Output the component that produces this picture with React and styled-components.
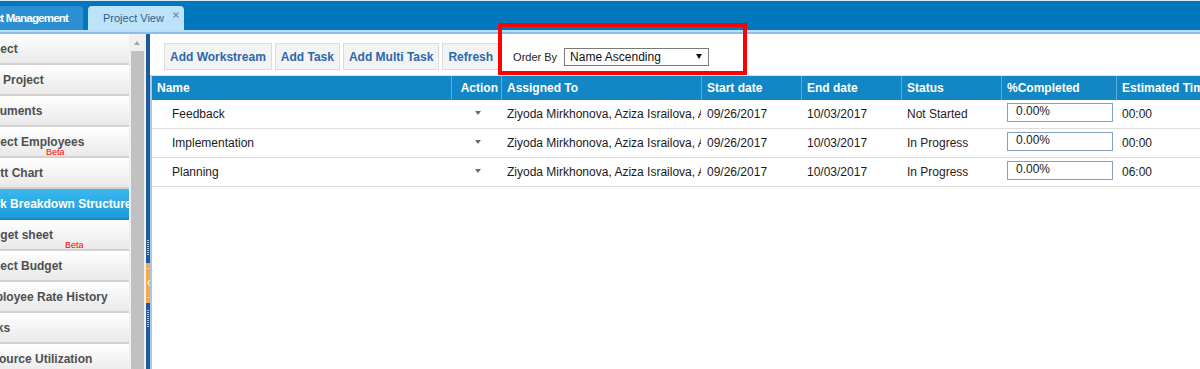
import React from 'react';
import styled, { createGlobalStyle } from 'styled-components';

const GlobalStyle = createGlobalStyle`
  html, body { margin: 0; padding: 0; background: #fff; }
  body { font-family: "Liberation Sans", Arial, sans-serif; font-size: 12px; color: #222; }
  * { box-sizing: border-box; }
`;

const Page = styled.div`
  position: relative;
  width: 1200px;
  height: 369px;
  overflow: hidden;
  display: flex;
  flex-direction: column;
  background: #fff;
`;

const TopBar = styled.div`
  flex: none;
  display: flex;
  flex-direction: column;
`;

const TabRow = styled.div`
  height: 30px;
  background: #0277bd;
  border-top: 1px solid #d9eaf7;
  display: flex;
  align-items: flex-end;
  gap: 5px;
`;

const Tab = styled.div`
  height: 24px;
  display: flex;
  align-items: center;
  white-space: nowrap;
  overflow: hidden;
  position: relative;
  background: ${p => (p.$active ? '#bde3f8' : '#2b8fd2')};
  color: ${p => (p.$active ? '#2d5e92' : '#fff')};
  font-weight: ${p => (p.$active ? 'normal' : 'bold')};
  font-size: ${p => (p.$active ? '11px' : '11.5px')};
  letter-spacing: ${p => (p.$active ? '0' : '-0.8px')};
  border-radius: ${p => (p.$active ? '4px 4px 0 0' : '0 4px 0 0')};
  width: ${p => p.$width}px;
  justify-content: ${p => (p.$clipLeft ? 'flex-end' : 'flex-start')};
  padding: ${p => (p.$clipLeft ? '0 15px 0 0' : '0 0 0 15px')};
`;

const TabClose = styled.svg`
  position: absolute;
  right: 5px;
  top: 6px;
`;

const TabUnderline = styled.div`
  height: 4px;
  border-top: 2px solid #b7dff7;
  background: #8ebdea;
`;

const Body = styled.div`
  flex: 1;
  display: flex;
  min-height: 0;
`;

const SidePanel = styled.div`
  width: 129px;
  flex: none;
  overflow: hidden;
  background: #fff;
`;

const MenuList = styled.div`
  margin-left: -31px;
  width: 160px;
`;

const MenuItem = styled.div`
  position: relative;
  height: 31px;
  line-height: 30px;
  padding-left: 8px;
  white-space: nowrap;
  font-weight: bold;
  font-size: 12px;
  color: ${p => (p.$active ? '#fff' : '#4f4f4f')};
  background: ${p => (p.$active ? 'linear-gradient(#3db7ee, #1d9cd9)' : 'linear-gradient(#ffffff, #e9e9e9)')};
  border-bottom: 2px solid ${p => (p.$active ? '#168bcb' : '#d5d0d0')};
`;

const Beta = styled.span`
  position: absolute;
  top: 20px;
  left: ${p => p.$left}px;
  line-height: 10px;
  font-size: 9px;
  font-weight: normal;
  color: #f00;
`;

const ScrollTrack = styled.div`
  width: 17px;
  flex: none;
  background: #f0f0f0;
  display: flex;
  flex-direction: column;
  align-items: center;
  padding: 7px 1px 0 0;
`;

const ScrollArrow = styled.div`
  width: 0;
  height: 0;
  border-left: 3.5px solid transparent;
  border-right: 3.5px solid transparent;
  border-bottom: 4px solid #a3a3a3;
`;

const ScrollThumb = styled.div`
  margin-top: 6px;
  width: 13px;
  flex: 1;
  background: #c1c1c1;
`;

const Splitter = styled.div`
  width: 4px;
  flex: none;
  background: #1f5b99;
  display: flex;
  flex-direction: column;
  align-items: center;
  padding-top: 206px;
`;

const Grip = styled.div`
  width: 2px;
  height: ${p => p.$h}px;
  margin-top: ${p => p.$mt}px;
  background: repeating-linear-gradient(to bottom, #a7c4e4 0 1px, transparent 1px 2px);
`;

const Handle = styled.div`
  margin-top: 8px;
  width: 4px;
  height: 40px;
  background: #f6a84b;
  display: flex;
  flex-direction: column;
  align-items: center;
  justify-content: space-between;
  padding: 5px 0;
`;

const HandleDot = styled.div`
  width: 1px;
  height: 1px;
  background: #fff;
`;

const Main = styled.div`
  flex: 1;
  min-width: 0;
  display: flex;
  flex-direction: column;
`;

const Toolbar = styled.div`
  height: 41px;
  flex: none;
  display: flex;
  align-items: center;
  padding: 9px 0 5px 14px;
  gap: 3px;
`;

const ToolButton = styled.button`
  height: 27px;
  padding: 0 5px;
  border: 1px solid #dcdcdc;
  background: #f3f3f3;
  color: #2a69ab;
  font-family: "Liberation Sans", Arial, sans-serif;
  font-weight: bold;
  font-size: 12px;
  cursor: pointer;
  white-space: nowrap;
`;

const OrderLabel = styled.span`
  margin-left: 11px;
  font-size: 11px;
  color: #222;
`;

const Select = styled.div`
  margin-left: 4px;
  width: 145px;
  height: 18px;
  border: 1px solid #7a7a7a;
  display: flex;
  align-items: center;
  justify-content: space-between;
  padding: 0 6px 0 5px;
  font-size: 12px;
  color: #111;
`;

const SelectArrow = styled.span`
  width: 0;
  height: 0;
  border-left: 3.5px solid transparent;
  border-right: 3.5px solid transparent;
  border-top: 5px solid #111;
`;

const Grid = styled.div`
  flex: 1;
  border-left: 2px solid #a6c8ec;
  overflow: hidden;
`;

const COLS = '299px 50px 200px 100px 100px 100px 115px 130px';

const HeaderRow = styled.div`
  display: grid;
  grid-template-columns: ${COLS};
  height: 25px;
  background: #1387c5;
  border-top: 1px solid #d3e6f5;
`;

const HeadCell = styled.div`
  display: flex;
  align-items: center;
  justify-content: ${p => (p.$right ? 'flex-end' : 'flex-start')};
  padding: ${p => (p.$right ? '0 3px 0 0' : '0 0 0 5px')};
  border-left: ${p => (p.$first ? 'none' : '1px solid #5aaadc')};
  color: #fff;
  font-weight: bold;
  font-size: 12px;
  white-space: nowrap;
  overflow: hidden;
`;

const DataRow = styled.div`
  display: grid;
  grid-template-columns: ${COLS};
  height: 29px;
  border-bottom: 1px solid #dcdcdc;
`;

const Cell = styled.div`
  display: flex;
  align-items: center;
  padding-left: ${p => p.$pad ?? 6}px;
  justify-content: ${p => (p.$center ? 'center' : 'flex-start')};
  white-space: nowrap;
  overflow: hidden;
  font-size: 12px;
  color: ${p => p.$color || '#1a1a1a'};
`;

const Caret = styled.span`
  width: 0;
  height: 0;
  margin-left: 3px;
  margin-top: -2px;
  border-left: 3.5px solid transparent;
  border-right: 3.5px solid transparent;
  border-top: 4px solid #6a6a6a;
`;

const PercentBox = styled.div`
  align-self: flex-start;
  margin-top: 3px;
  width: 106px;
  height: 19px;
  border: 1px solid #809fc9;
  padding: 0 0 3px 8px;
  display: flex;
  align-items: center;
  font-size: 12px;
  color: #1a1a1a;
`;

const Annotation = styled.div`
  position: absolute;
  left: 498px;
  top: 23px;
  width: 249px;
  height: 52px;
  border: 4px solid #ff0000;
  pointer-events: none;
`;

const menu = [
  { label: 'Project' },
  { label: 'Sub Project' },
  { label: 'Documents' },
  { label: 'Project Employees', beta: 77 },
  { label: 'Gantt Chart' },
  { label: 'Work Breakdown Structure', active: true },
  { label: 'Budget sheet', beta: 96 },
  { label: 'Project Budget' },
  { label: 'Employee Rate History' },
  { label: 'Tasks' },
  { label: 'Resource Utilization' },
];

const columns = ['Name', 'Action', 'Assigned To', 'Start date', 'End date', 'Status', '%Completed', 'Estimated Time'];

const rows = [
  { name: 'Feedback', status: 'Not Started', est: '00:00' },
  { name: 'Implementation', status: 'In Progress', est: '00:00' },
  { name: 'Planning', status: 'In Progress', est: '06:00' },
];

export default function App() {
  return (
    <>
      <GlobalStyle />
      <Page>
        <TopBar>
          <TabRow>
            <Tab $width={83} $clipLeft>Project Management</Tab>
            <Tab $width={96} $active>
              Project View
              <TabClose width="6" height="6" viewBox="0 0 6 6">
                <path d="M0.5 0.5 L5.5 5.5 M5.5 0.5 L0.5 5.5" stroke="#7391b3" strokeWidth="1.4" />
              </TabClose>
            </Tab>
          </TabRow>
          <TabUnderline />
        </TopBar>
        <Body>
          <SidePanel>
            <MenuList>
              {menu.map(m => (
                <MenuItem key={m.label} $active={m.active}>
                  {m.label}
                  {m.beta && <Beta $left={m.beta}>Beta</Beta>}
                </MenuItem>
              ))}
            </MenuList>
          </SidePanel>
          <ScrollTrack>
            <ScrollArrow />
            <ScrollThumb />
          </ScrollTrack>
          <Splitter>
            <Grip $h={15} $mt={0} />
            <Handle>
              <HandleDot />
              <svg width="3" height="6" viewBox="0 0 3 6">
                <path d="M2.6 0.4 L0.6 3 L2.6 5.6" stroke="#fff" strokeWidth="1.1" fill="none" />
              </svg>
              <HandleDot />
            </Handle>
            <Grip $h={17} $mt={7} />
          </Splitter>
          <Main>
            <Toolbar>
              <ToolButton>Add Workstream</ToolButton>
              <ToolButton>Add Task</ToolButton>
              <ToolButton>Add Multi Task</ToolButton>
              <ToolButton>Refresh</ToolButton>
              <OrderLabel>Order By</OrderLabel>
              <Select>
                Name Ascending
                <SelectArrow />
              </Select>
            </Toolbar>
            <Grid>
              <HeaderRow>
                {columns.map((c, i) => (
                  <HeadCell key={c} $first={i === 0} $right={c === 'Action'}>{c}</HeadCell>
                ))}
              </HeaderRow>
              {rows.map(r => (
                <DataRow key={r.name}>
                  <Cell $pad={20}>{r.name}</Cell>
                  <Cell $pad={0} $center><Caret /></Cell>
                  <Cell>Ziyoda Mirkhonova, Aziza Israilova, Akmal Tursunov</Cell>
                  <Cell>09/26/2017</Cell>
                  <Cell>10/03/2017</Cell>
                  <Cell $color="#2a1a26">{r.status}</Cell>
                  <Cell><PercentBox>0.00%</PercentBox></Cell>
                  <Cell>{r.est}</Cell>
                </DataRow>
              ))}
            </Grid>
          </Main>
        </Body>
        <Annotation />
      </Page>
    </>
  );
}
